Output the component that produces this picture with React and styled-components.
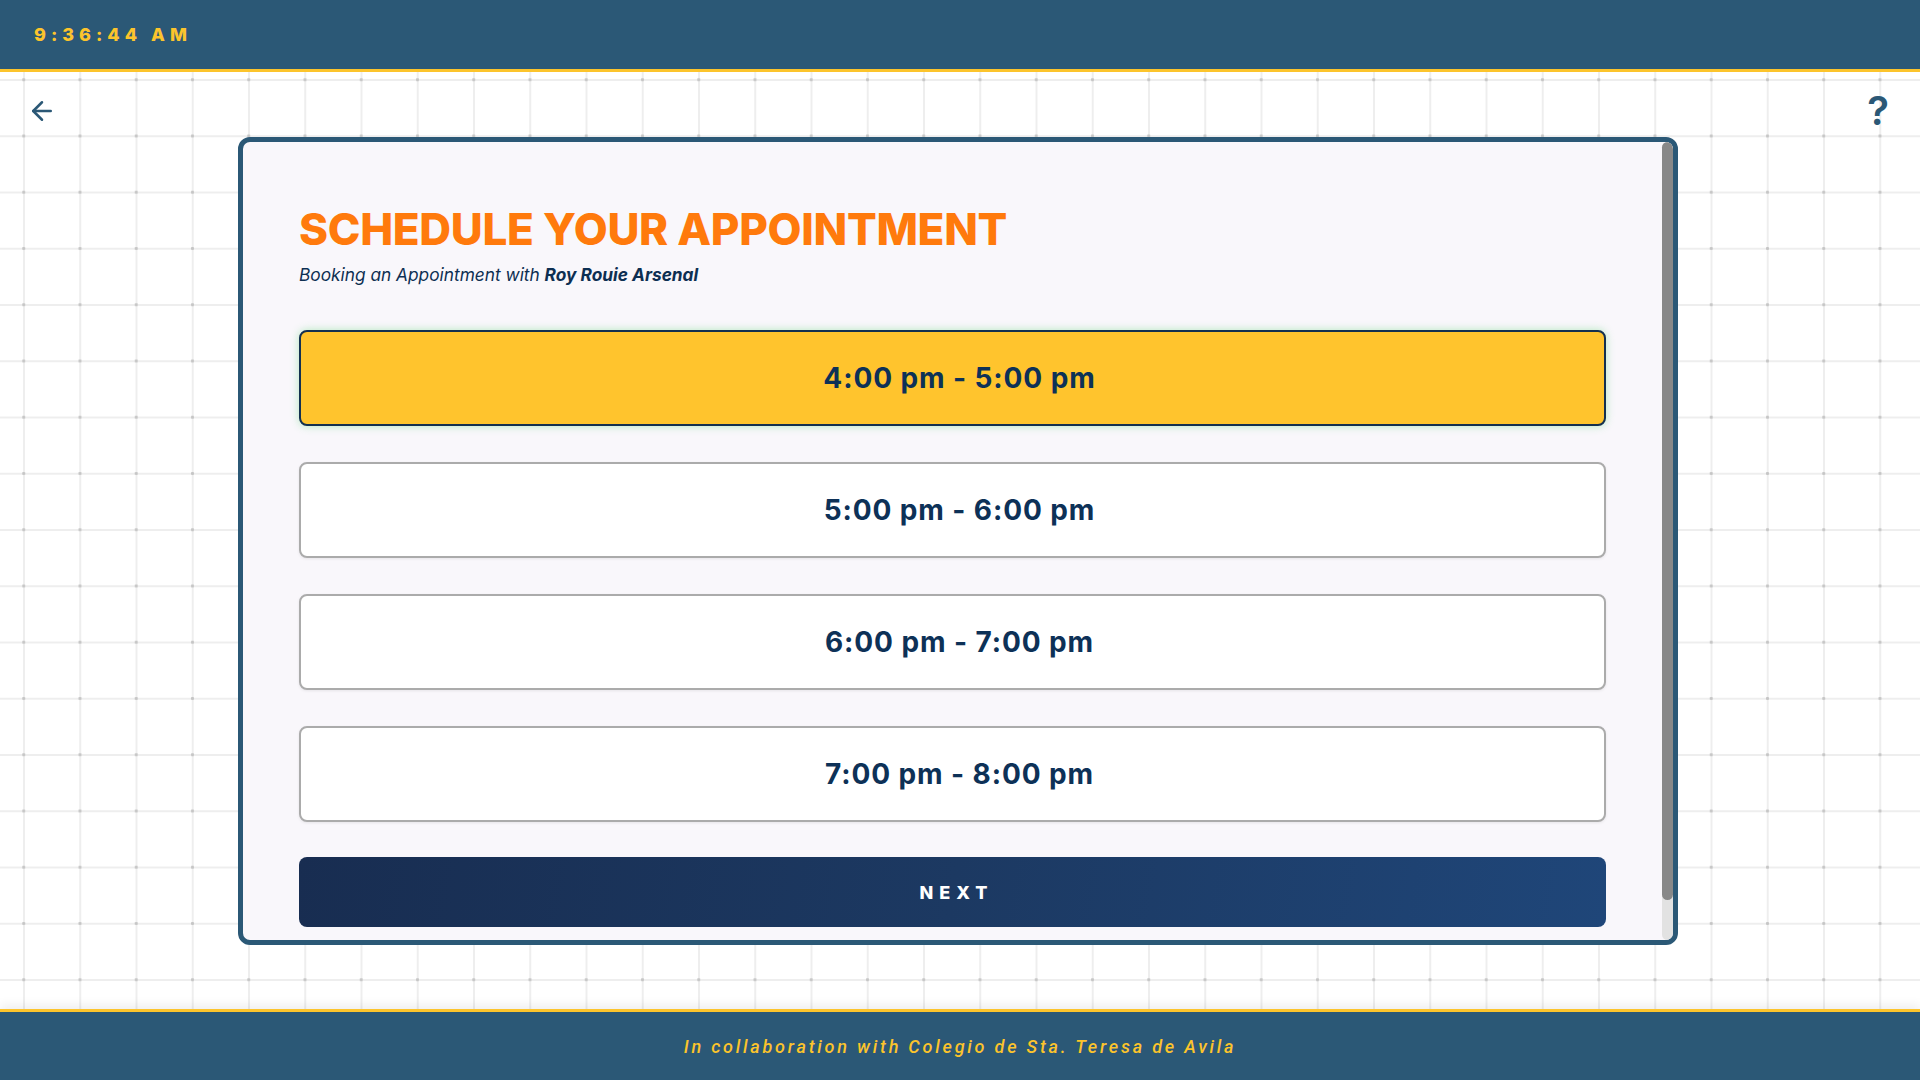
import React, { useState } from "react";
import styled, { createGlobalStyle } from "styled-components";
import { ArrowLeft } from "lucide-react";

const GlobalStyle = createGlobalStyle`
  html, body {
    margin: 0;
    padding: 0;
  }
  body {
    font-family: Inter, "Noto Sans", sans-serif;
    overflow: hidden;
  }
  * {
    box-sizing: border-box;
  }
`;

// Styled components
const Page = styled.div`
  display: flex;
  flex-direction: column;
  height: 100vh;
  width: 100vw;
`;

const TopBar = styled.header`
  flex: none;
  height: 72px;
  background-color: #2b5876;
  border-bottom: 3px solid #fcc42c;
  display: flex;
  align-items: center;
  padding-left: 34px;
  position: relative;
  z-index: 2;
`;

const Clock = styled.span`
  font-family: Inter, sans-serif;
  font-weight: 800;
  font-size: 18px;
  letter-spacing: 5px;
  color: #fcc42c;
`;

const Main = styled.main`
  flex: 1;
  display: flex;
  align-items: center;
  background-color: #ffffff;
  background-image: radial-gradient(circle, #c6c6c6 1.2px, transparent 2px),
    linear-gradient(to right, #eeeeee 1.5px, transparent 1.5px),
    linear-gradient(to bottom, #eeeeee 1.5px, transparent 1.5px);
  background-size: 56.25px 56.25px;
  background-position: -4.4px -20.4px, 23px 7px, 23px 7px;
`;

const Rail = styled.div`
  flex: 1;
  align-self: stretch;
  display: flex;
  justify-content: ${(p) => (p.$right ? "flex-end" : "flex-start")};
  align-items: flex-start;
  padding: ${(p) => (p.$right ? "19px 31px 0 0" : "24px 0 0 27px")};
`;

const BackButton = styled.button`
  border: none;
  background: none;
  padding: 0;
  color: #2b5876;
  display: flex;
  cursor: pointer;
`;

const HelpMark = styled.span`
  font-family: Inter, sans-serif;
  font-weight: 600;
  font-size: 40px;
  line-height: 1;
  color: #2b5876;
`;

const Card = styled.section`
  flex: none;
  width: 1440px;
  height: 808px;
  display: flex;
  background-color: #f9f7fb;
  border: 5px solid #2b5876;
  border-radius: 12px;
  overflow: hidden;
`;

const CardScroll = styled.div`
  flex: 1;
  overflow: hidden;
`;

// the card scrolls; the bar is drawn since the browser hides its own
const ScrollTrack = styled.div`
  flex: none;
  width: 11px;
  background: #e2e2e2;
  border-radius: 6px;
  display: flex;
  flex-direction: column;
`;

const ScrollThumb = styled.div`
  flex: none;
  background: #888888;
  border-radius: 6px;
`;

const CardBody = styled.div`
  padding: 61px 56px 53px 56px;
`;

const Title = styled.h1`
  margin: 0;
  font-family: Inter, sans-serif;
  font-weight: 800;
  font-size: 44px;
  line-height: 1.2;
  letter-spacing: -0.3px;
  color: #ff7a0c;
`;

const Subtitle = styled.p`
  margin: 8px 0 0 0;
  font-family: Inter, sans-serif;
  font-style: italic;
  font-size: 17.3px;
  line-height: 24px;
  color: #0d2f52;

  strong {
    font-weight: 700;
  }
`;

const SlotList = styled.div`
  margin-top: 43px;
  display: flex;
  flex-direction: column;
  gap: 36px;
`;

const Slot = styled.button`
  height: 96px;
  width: 100%;
  padding: 0 0 0 14px;
  border-radius: 8px;
  border: 2px solid ${(p) => (p.$active ? "#14304f" : "#ababab")};
  background-color: ${(p) => (p.$active ? "#ffc42d" : "#ffffff")};
  box-shadow: ${(p) =>
    p.$active
      ? "0 0 9px rgba(96, 214, 120, 0.45)"
      : "0 1px 3px rgba(0, 0, 0, 0.08)"};
  font-family: Inter, sans-serif;
  font-weight: 700;
  font-size: 28px;
  letter-spacing: 0.9px;
  color: #0d3157;
  cursor: pointer;
`;

const NextButton = styled.button`
  margin-top: 35px;
  height: 70px;
  width: 100%;
  padding: 0 0 0 8px;
  border: none;
  border-radius: 8px;
  background: linear-gradient(100deg, #182d51 0%, #1c3962 50%, #1f4679 100%);
  color: #ffffff;
  font-family: Inter, sans-serif;
  font-weight: 800;
  font-size: 18px;
  letter-spacing: 6px;
  cursor: pointer;
`;

const BottomBar = styled.footer`
  flex: none;
  height: 71px;
  background-color: #2b5876;
  border-top: 3px solid #fcc42c;
  display: flex;
  align-items: center;
  justify-content: center;
  box-shadow: 0 -4px 10px rgba(0, 0, 0, 0.07);
`;

const Credit = styled.span`
  font-family: Roboto, sans-serif;
  font-style: italic;
  font-weight: 500;
  font-size: 18px;
  letter-spacing: 2.8px;
  color: #fcc42c;
`;

const slots = [
  "4:00 pm - 5:00 pm",
  "5:00 pm - 6:00 pm",
  "6:00 pm - 7:00 pm",
  "7:00 pm - 8:00 pm",
];

const App = () => {
  const [selected, setSelected] = useState(0);

  return (
    <>
      <GlobalStyle />
      <Page>
        <TopBar>
          <Clock>9:36:44 AM</Clock>
        </TopBar>

        <Main>
          <Rail>
            <BackButton aria-label="Back">
              <ArrowLeft size={30} strokeWidth={2} />
            </BackButton>
          </Rail>

          <Card>
            <CardScroll>
              <CardBody>
                <Title>SCHEDULE YOUR APPOINTMENT</Title>
                <Subtitle>
                  Booking an Appointment with{" "}
                  <strong>Roy Rouie Arsenal</strong>
                </Subtitle>

                <SlotList>
                  {slots.map((slot, i) => (
                    <Slot
                      key={slot}
                      $active={selected === i}
                      onClick={() => setSelected(i)}
                    >
                      {slot}
                    </Slot>
                  ))}
                </SlotList>

                <NextButton>NEXT</NextButton>
              </CardBody>
            </CardScroll>
            <ScrollTrack>
              <ScrollThumb style={{ height: "95%" }} />
            </ScrollTrack>
          </Card>

          <Rail $right>
            <HelpMark>?</HelpMark>
          </Rail>
        </Main>

        <BottomBar>
          <Credit>In collaboration with Colegio de Sta. Teresa de Avila</Credit>
        </BottomBar>
      </Page>
    </>
  );
};

export default App;
